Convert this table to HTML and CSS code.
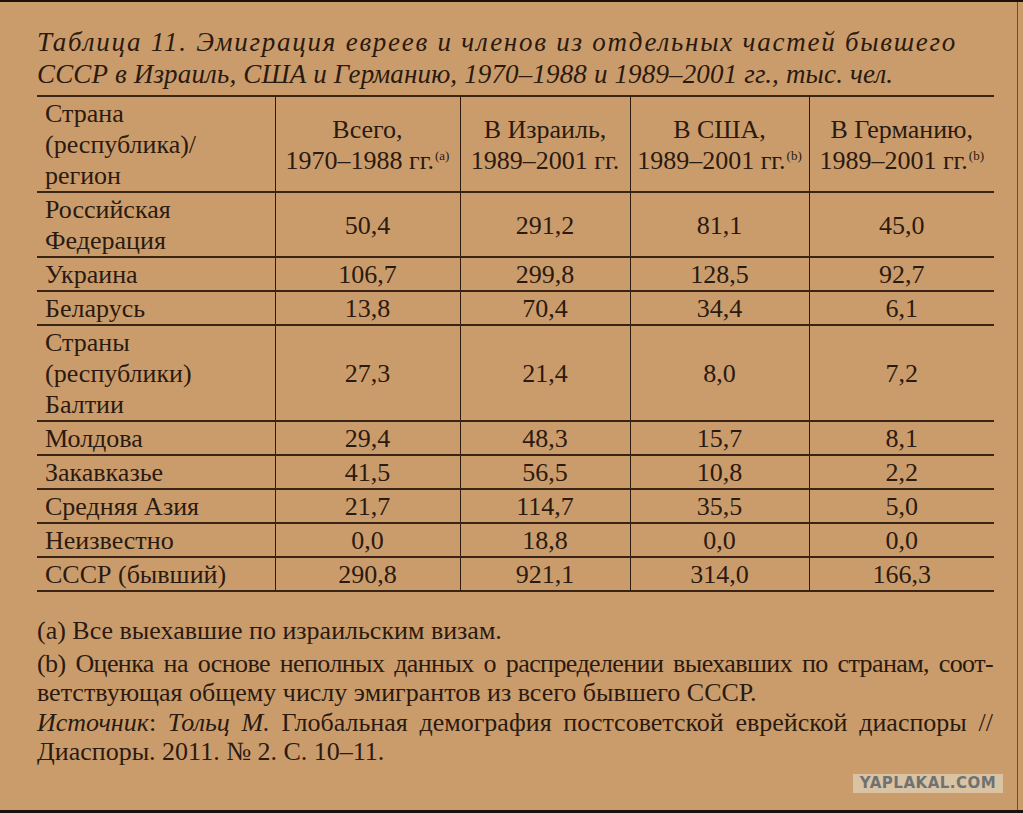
FILE: index.html
```html
<!DOCTYPE html>
<html lang="ru">
<head>
<meta charset="utf-8">
<title>Таблица 11</title>
<link rel="stylesheet" href="styles.css">
</head>
<body>
<div class="page">
  <div class="sheet">
    <h1 class="title"><span class="t1">Таблица 11. Эмиграция евреев и членов из отдельных частей бывшего</span><span class="t2">СССР в Израиль, США и Германию, 1970–1988 и 1989–2001 гг., тыс. чел.</span></h1>
    <table class="data">
      <colgroup>
        <col class="c1"><col class="c2"><col class="c3"><col class="c4"><col class="c5">
      </colgroup>
      <thead>
        <tr>
          <th class="name">Страна<br>(республика)/<br>регион</th>
          <th>Всего,<br>1970–1988 гг.<sup class="sup">(a)</sup></th>
          <th>В Израиль,<br>1989–2001 гг.</th>
          <th>В США,<br>1989–2001 гг.<sup class="sup">(b)</sup></th>
          <th>В Германию,<br>1989–2001 гг.<sup class="sup">(b)</sup></th>
        </tr>
      </thead>
      <tbody>
        <tr><td class="name">Российская<br>Федерация</td><td>50,4</td><td>291,2</td><td>81,1</td><td>45,0</td></tr>
        <tr><td class="name">Украина</td><td>106,7</td><td>299,8</td><td>128,5</td><td>92,7</td></tr>
        <tr><td class="name">Беларусь</td><td>13,8</td><td>70,4</td><td>34,4</td><td>6,1</td></tr>
        <tr><td class="name">Страны<br>(республики)<br>Балтии</td><td>27,3</td><td>21,4</td><td>8,0</td><td>7,2</td></tr>
        <tr><td class="name">Молдова</td><td>29,4</td><td>48,3</td><td>15,7</td><td>8,1</td></tr>
        <tr><td class="name">Закавказье</td><td>41,5</td><td>56,5</td><td>10,8</td><td>2,2</td></tr>
        <tr><td class="name">Средняя Азия</td><td>21,7</td><td>114,7</td><td>35,5</td><td>5,0</td></tr>
        <tr><td class="name">Неизвестно</td><td>0,0</td><td>18,8</td><td>0,0</td><td>0,0</td></tr>
        <tr><td class="name">СССР (бывший)</td><td>290,8</td><td>921,1</td><td>314,0</td><td>166,3</td></tr>
      </tbody>
    </table>
    <div class="notes">
      <p class="note first">(a) Все выехавшие по израильским визам.</p>
      <div class="note">
        <div class="just tight">(b) Оценка на основе неполных данных о распределении выехавших по странам, соот-</div>
        <div>ветствующая общему числу эмигрантов из всего бывшего СССР.</div>
      </div>
      <div class="note">
        <div class="just"><i>Источник</i>: <i>Тольц М.</i> Глобальная демография постсоветской еврейской диаспоры //</div>
        <div>Диаспоры. 2011. № 2. С. 10–11.</div>
      </div>
    </div>
    <div class="mark">YAPLAKAL.COM</div>
  </div>
</div>
</body>
</html>
```
FILE: styles.css
```css
html {
  background: #ca9c6c;
}
body {
  margin: 0;
  color: #2a1a0f;
  font-family: "Liberation Serif", "Times New Roman", serif;
}
.page {
  height: 813px;
  border-top: 2px solid #1c110a;
  border-bottom: 3px solid #1c110a;
  box-sizing: border-box;
}
.sheet {
  position: relative;
  width: 1018px;
  height: 100%;
  box-sizing: border-box;
  border-right: 1px solid #6b4d33;
  padding: 24px 0 0 37px;
}
.title {
  margin: 0 0 5px 0;
  font-size: 27px;
  line-height: 32px;
  font-style: italic;
  font-weight: normal;
  white-space: nowrap;
}
.t1,
.t2 {
  display: block;
}
.t1 {
  letter-spacing: 1.75px;
}
.t2 {
  letter-spacing: 0.15px;
}
.data {
  border-collapse: collapse;
  table-layout: fixed;
  width: 957px;
  font-size: 26px;
  line-height: 31px;
}
.c1 { width: 238px; }
.c2 { width: 185px; }
.c3 { width: 170px; }
.c4 { width: 179px; }
.c5 { width: 185px; }
.data th,
.data td {
  padding: 1px 0 0 0;
  font-weight: normal;
  text-align: center;
  vertical-align: middle;
  border-left: 1px solid #2e1c10;
  border-right: 1px solid #2e1c10;
  border-bottom: 2px solid #3a2415;
  white-space: nowrap;
}
.data th {
  border-top: 2px solid #3a2415;
}
.data .name {
  text-align: left;
  padding-left: 8px;
  border-left: none;
}
.data th:last-child,
.data td:last-child {
  border-right: none;
}
.sup {
  font-size: 13px;
  line-height: 0;
  vertical-align: 9px;
  margin-left: 1px;
}
.notes {
  width: 956px;
  margin-top: 24px;
  font-size: 26px;
  line-height: 29.5px;
}
.note {
  margin: 0;
}
.note.first {
  margin-bottom: 3px;
}
.just {
  text-align: justify;
  text-align-last: justify;
}
.tight {
  white-space: nowrap;
  letter-spacing: -0.6px;
  word-spacing: -1px;
}
.mark {
  position: absolute;
  top: 772px;
  right: 14px;
  width: 150px;
  height: 19px;
  background: #dac3a2;
  color: #6e7272;
  font-family: "DejaVu Sans", sans-serif;
  font-weight: bold;
  font-size: 15px;
  line-height: 19px;
  text-align: center;
  letter-spacing: 0.5px;
}
```
